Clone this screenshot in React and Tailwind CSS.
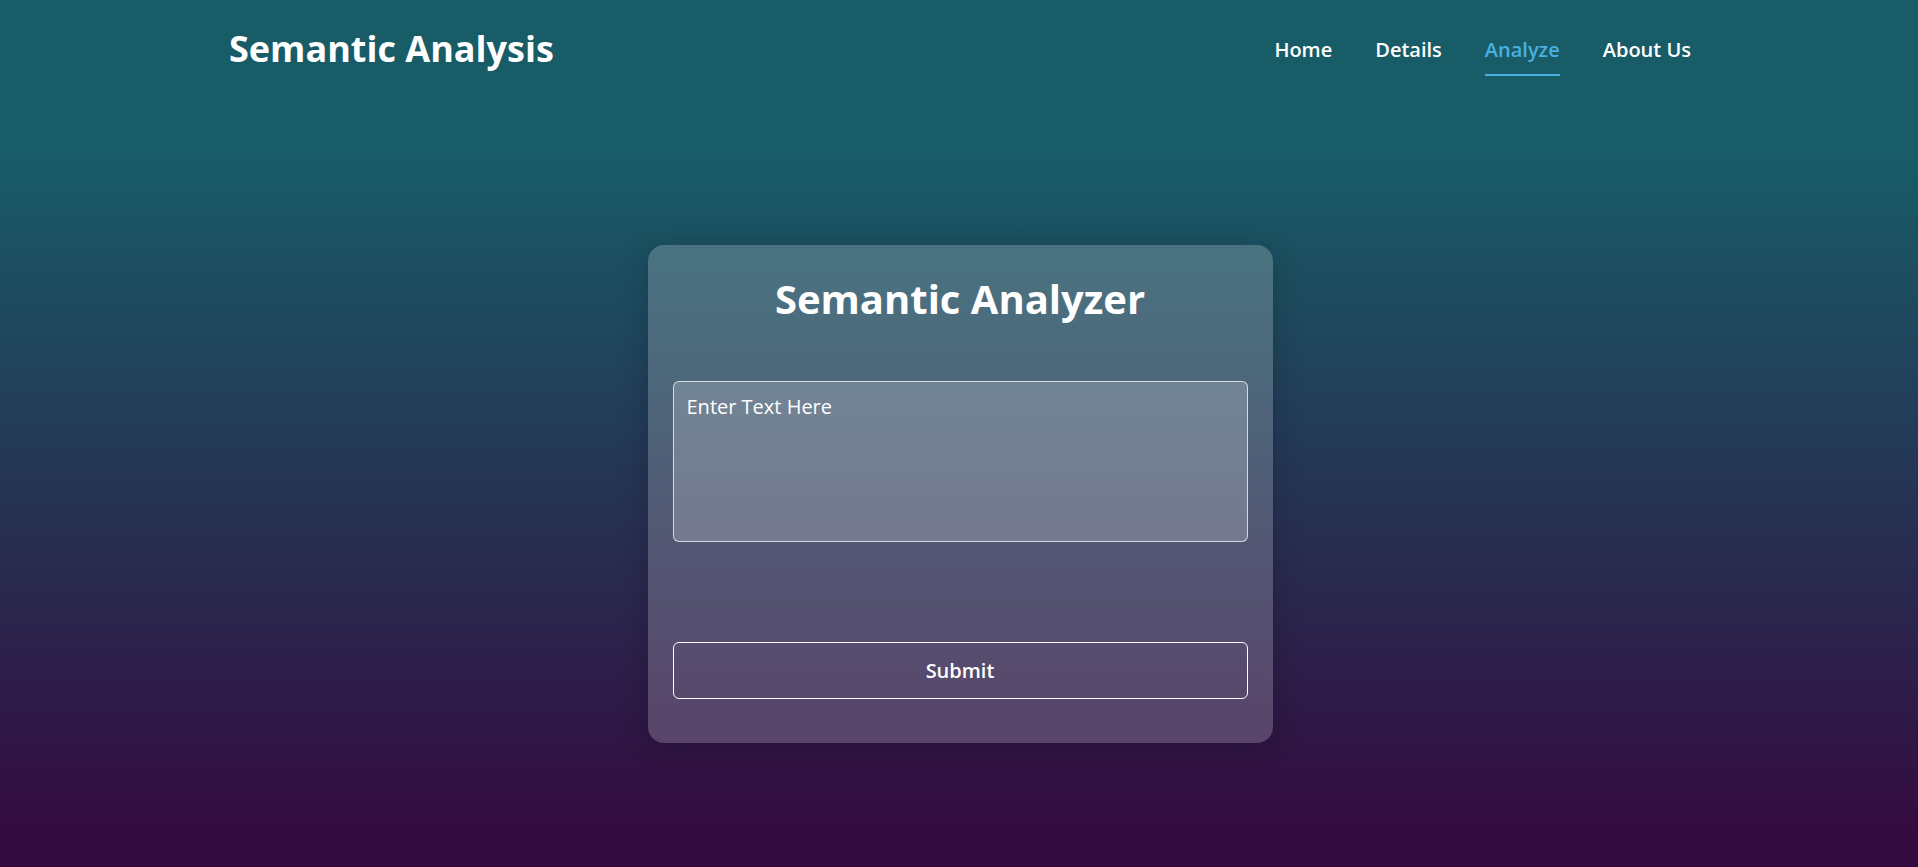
import React, { useState } from 'react';

const links = ['Home', 'Details', 'Analyze', 'About Us'];

export default function App() {
  const [text, setText] = useState('');
  const active = 'Analyze';

  return (
    <div className="min-h-screen h-[867px] bg-[linear-gradient(180deg,#185c67_18%,#340b40_96%)] font-['Open_Sans',sans-serif] text-white">
      <header className="w-[1464px] mx-auto h-[92px] pt-[22px] pl-[2px] flex items-start justify-between">
        <h1 className="mt-[2px] text-[36px] leading-[49px] font-bold">Semantic Analysis</h1>
        <nav className="mt-[14px] flex gap-[43px]">
          {links.map((l) => (
            <a
              key={l}
              href="#"
              className={
                l === active
                  ? 'text-[20px] leading-[27px] font-semibold pb-[11px] border-b-2 border-[#4ab0e2] text-[#4ab0e2]'
                  : 'text-[20px] leading-[27px] font-semibold pb-[11px] border-b-2 border-transparent'
              }
            >
              {l}
            </a>
          ))}
        </nav>
      </header>

      <main className="flex justify-center pt-[153px] pl-[2px]">
        <div className="w-[625px] rounded-2xl bg-white/20 shadow-[0_4px_30px_rgba(0,0,0,0.2)] px-[25px] pt-[27px] pb-[44px]">
          <h2 className="text-center text-[40px] leading-[54px] font-bold">Semantic Analyzer</h2>
          <textarea
            value={text}
            onChange={(e) => setText(e.target.value)}
            placeholder="Enter Text Here"
            className="mt-[55px] block w-full h-[161px] resize-none rounded-md border border-white/70 bg-white/20 px-[13px] pt-[11px] text-[20px] leading-[27px] text-white placeholder:text-white outline-none"
          />
          <button className="mt-[100px] block w-full h-[57px] rounded-md border border-white text-[20px] font-semibold">
            Submit
          </button>
        </div>
      </main>
    </div>
  );
}
